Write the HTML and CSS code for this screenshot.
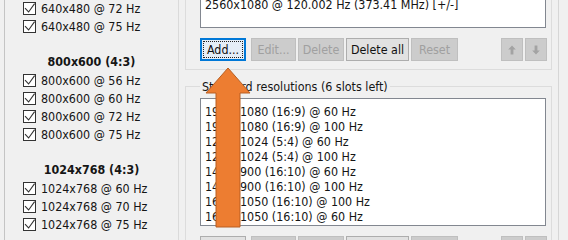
FILE: index.html
```html
<!DOCTYPE html>
<html>
<head>
<meta charset="utf-8">
<link rel="stylesheet" href="styles.css">
</head>
<body>
<div class="page">
  <div class="est">
    <div class="est-list">
      <div class="cb-row"><span class="cb"><svg width="13" height="13" viewBox="0 0 13 13"><rect x="0.5" y="0.5" width="12" height="12" fill="#fff" stroke="#333"/><path d="M2 6.2 L5.6 10 L11.6 1.6" fill="none" stroke="#333" stroke-width="1.1"/></svg></span>640x480 @ 72 Hz</div>
      <div class="cb-row"><span class="cb"><svg width="13" height="13" viewBox="0 0 13 13"><rect x="0.5" y="0.5" width="12" height="12" fill="#fff" stroke="#333"/><path d="M2 6.2 L5.6 10 L11.6 1.6" fill="none" stroke="#333" stroke-width="1.1"/></svg></span>640x480 @ 75 Hz</div>
      <div class="blank"></div>
      <div class="hdr">800x600 (4:3)</div>
      <div class="cb-row"><span class="cb"><svg width="13" height="13" viewBox="0 0 13 13"><rect x="0.5" y="0.5" width="12" height="12" fill="#fff" stroke="#333"/><path d="M2 6.2 L5.6 10 L11.6 1.6" fill="none" stroke="#333" stroke-width="1.1"/></svg></span>800x600 @ 56 Hz</div>
      <div class="cb-row"><span class="cb"><svg width="13" height="13" viewBox="0 0 13 13"><rect x="0.5" y="0.5" width="12" height="12" fill="#fff" stroke="#333"/><path d="M2 6.2 L5.6 10 L11.6 1.6" fill="none" stroke="#333" stroke-width="1.1"/></svg></span>800x600 @ 60 Hz</div>
      <div class="cb-row"><span class="cb"><svg width="13" height="13" viewBox="0 0 13 13"><rect x="0.5" y="0.5" width="12" height="12" fill="#fff" stroke="#333"/><path d="M2 6.2 L5.6 10 L11.6 1.6" fill="none" stroke="#333" stroke-width="1.1"/></svg></span>800x600 @ 72 Hz</div>
      <div class="cb-row"><span class="cb"><svg width="13" height="13" viewBox="0 0 13 13"><rect x="0.5" y="0.5" width="12" height="12" fill="#fff" stroke="#333"/><path d="M2 6.2 L5.6 10 L11.6 1.6" fill="none" stroke="#333" stroke-width="1.1"/></svg></span>800x600 @ 75 Hz</div>
      <div class="blank"></div>
      <div class="hdr">1024x768 (4:3)</div>
      <div class="cb-row"><span class="cb"><svg width="13" height="13" viewBox="0 0 13 13"><rect x="0.5" y="0.5" width="12" height="12" fill="#fff" stroke="#333"/><path d="M2 6.2 L5.6 10 L11.6 1.6" fill="none" stroke="#333" stroke-width="1.1"/></svg></span>1024x768 @ 60 Hz</div>
      <div class="cb-row"><span class="cb"><svg width="13" height="13" viewBox="0 0 13 13"><rect x="0.5" y="0.5" width="12" height="12" fill="#fff" stroke="#333"/><path d="M2 6.2 L5.6 10 L11.6 1.6" fill="none" stroke="#333" stroke-width="1.1"/></svg></span>1024x768 @ 70 Hz</div>
      <div class="cb-row"><span class="cb"><svg width="13" height="13" viewBox="0 0 13 13"><rect x="0.5" y="0.5" width="12" height="12" fill="#fff" stroke="#333"/><path d="M2 6.2 L5.6 10 L11.6 1.6" fill="none" stroke="#333" stroke-width="1.1"/></svg></span>1024x768 @ 75 Hz</div>
    </div>
  </div>

  <div class="right">
    <div class="group group-top">
      <div class="listbox listbox-top">
        <div class="item">2560x1080 @ 120.002 Hz (373.41 MHz) [+/-]</div>
      </div>
      <div class="btnrow">
        <button class="btn default w-add">Add...</button>
        <button class="btn disabled w-edit">Edit...</button>
        <button class="btn disabled w-del">Delete</button>
        <button class="btn w-delall">Delete all</button>
        <button class="btn disabled w-reset">Reset</button>
        <span class="spacer"></span>
        <button class="btn disabled sq"><svg width="8" height="10" viewBox="0 0 8 10"><path d="M4 0.5 L7.8 4.6 H5.4 V9.5 H2.6 V4.6 H0.2 Z" fill="#a3a3a3"/></svg></button>
        <button class="btn disabled sq"><svg width="8" height="10" viewBox="0 0 8 10"><path d="M4 9.5 L7.8 5.4 H5.4 V0.5 H2.6 V5.4 H0.2 Z" fill="#a3a3a3"/></svg></button>
      </div>
    </div>

    <fieldset class="group group-std">
      <legend>Standard resolutions (6 slots left)</legend>
      <div class="listbox listbox-std">
        <div class="item">1920x1080 (16:9) @ 60 Hz</div>
        <div class="item">1920x1080 (16:9) @ 100 Hz</div>
        <div class="item">1280x1024 (5:4) @ 60 Hz</div>
        <div class="item">1280x1024 (5:4) @ 100 Hz</div>
        <div class="item">1440x900 (16:10) @ 60 Hz</div>
        <div class="item">1440x900 (16:10) @ 100 Hz</div>
        <div class="item">1680x1050 (16:10) @ 100 Hz</div>
        <div class="item">1680x1050 (16:10) @ 60 Hz</div>
      </div>
      <div class="btnrow">
        <button class="btn w-add"></button>
        <button class="btn disabled w-edit"></button>
        <button class="btn disabled w-del"></button>
        <button class="btn w-delall"></button>
        <button class="btn disabled w-reset"></button>
        <span class="spacer"></span>
        <button class="btn disabled sq"></button>
        <button class="btn disabled sq"></button>
      </div>
    </fieldset>
  </div>

  <div class="frame"></div>

  <svg class="arrow" width="60" height="175" viewBox="0 0 60 175">
    <polygon points="28,8 50,33 40,33 40,167 16,167 16,33 6,33" fill="#ed7d31" stroke="#b85f22" stroke-width="1"/>
  </svg>
</div>
</body>
</html>
```

FILE: styles.css
```css
html, body {
  margin: 0;
  padding: 0;
}

body {
  background: #f0f0f0;
  font-family: "DejaVu Sans Condensed", "DejaVu Sans", sans-serif;
  font-size: 12.4px;
  color: #151515;
  overflow: hidden;
}

.page {
  position: relative;
  width: 568px;
  height: 240px;
  display: flex;
  align-items: flex-start;
  overflow: hidden;
}

/* left: established resolutions */
.est {
  margin-left: 4px;
  width: 175px;
  height: 240px;
  box-sizing: border-box;
  border-left: 1px solid #c4c4c4;
  border-right: 1px solid #dadada;
  flex: none;
}

.est-list {
  margin-top: -1px;
}

.cb-row {
  height: 18px;
  display: flex;
  align-items: center;
  gap: 5px;
  padding-left: 18px;
  white-space: nowrap;
}

.cb {
  width: 13px;
  height: 13px;
  display: block;
  margin-top: 1px;
}

.cb svg {
  display: block;
}

.blank {
  height: 18px;
}

.hdr {
  height: 18px;
  line-height: 18px;
  text-align: center;
  font-weight: bold;
}

/* right column */
.right {
  margin-left: 6px;
  width: 367px;
  flex: none;
}

.group {
  box-sizing: border-box;
  width: 367px;
  border: 1px solid #dcdcdc;
  padding: 0 5px 0 14px;
  margin: 0;
  min-width: 0;
}

.group-top {
  border-top: none;
  padding-bottom: 8px;
}

.group-std {
  margin-top: 9px;
  height: 200px;
}

.group-std legend {
  padding: 0 2px;
  margin: 0;
  line-height: 15px;
  height: 15px;
}

.listbox {
  box-sizing: border-box;
  width: 346px;
  background: #fff;
  border: 1px solid #828790;
  padding-left: 4px;
}

.listbox-top {
  margin-top: -12px;
  height: 40px;
  padding-top: 8px;
}

.listbox-std {
  margin-top: 4px;
  height: 128px;
  padding-top: 5px;
}

.item {
  height: 15px;
  line-height: 15px;
  white-space: nowrap;
}

.btnrow {
  display: flex;
  gap: 2px;
  margin-top: 10px;
  width: 347px;
}

.spacer {
  flex: 1;
}

.btn {
  height: 23px;
  box-sizing: border-box;
  border: 1px solid #adadad;
  background: #e1e1e1;
  font: inherit;
  color: #111;
  padding: 0;
  margin: 0;
  display: flex;
  align-items: center;
  justify-content: center;
  flex: none;
}

.btn.disabled {
  background: #cccccc;
  border-color: #bfbfbf;
  color: #a0a0a0;
}

.btn.default {
  border-color: #0078d7;
  box-shadow: inset 0 0 0 1px #0078d7;
  background: #e5eef7;
  outline: 1px dotted #222;
  outline-offset: -4px;
}

.w-add { width: 46px; margin-right: 3px; }
.w-edit { width: 45px; }
.w-del { width: 46px; }
.w-delall { width: 63px; }
.w-reset { width: 47px; }
.sq { width: 22px; }

.frame {
  margin-left: 6px;
  width: 1px;
  height: 240px;
  background: #d6d6d6;
  flex: none;
}

.arrow {
  position: absolute;
  left: 200px;
  top: 60px;
}
```
